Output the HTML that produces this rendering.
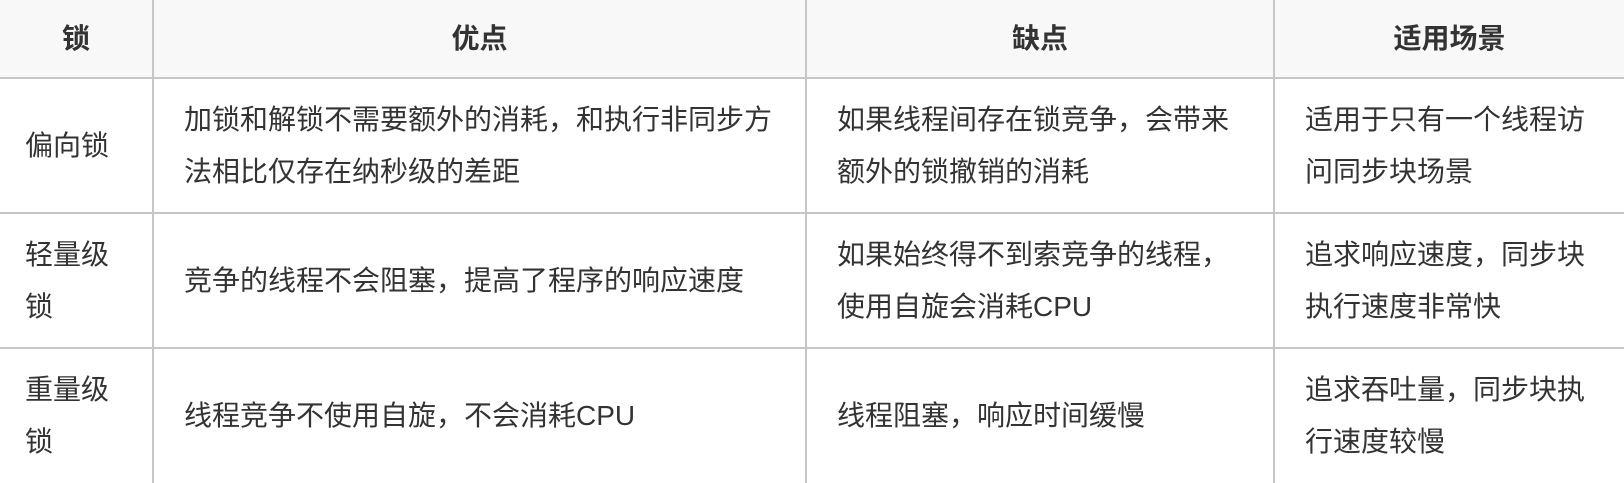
<!DOCTYPE html>
<html><head><meta charset="utf-8"><style>
html,body{margin:0;padding:0;background:#fff;}
body{width:1624px;height:470px;overflow:hidden;font-family:"Liberation Sans","Noto Sans CJK SC",sans-serif;color:#333;}
table{border-collapse:collapse;table-layout:fixed;width:1624px;}
td,th{font-size:28px;line-height:52px;vertical-align:middle;padding:0 30px;border:2px solid #c6c6c6;text-align:left;}
tr>*:first-child{border-left:none;padding:0 22px 0 25px;}
tr>*:nth-child(3){padding-right:40px;}
tr>*:last-child{border-right:none;}
thead tr th{border-top:none;background:#f8f8f8;text-align:center;font-weight:bold;height:77px;padding:0 !important;}
tbody tr{height:135px;}
tbody tr:last-child td{border-bottom:none;}
</style></head><body>
<table>
<colgroup><col style="width:153px"><col style="width:653px"><col style="width:468px"><col style="width:350px"></colgroup>
<thead><tr><th>锁</th><th>优点</th><th>缺点</th><th>适用场景</th></tr></thead>
<tbody>
<tr><td>偏向锁</td><td>加锁和解锁不需要额外的消耗，和执行非同步方法相比仅存在纳秒级的差距</td><td>如果线程间存在锁竞争，会带来额外的锁撤销的消耗</td><td>适用于只有一个线程访问同步块场景</td></tr>
<tr><td>轻量级锁</td><td>竞争的线程不会阻塞，提高了程序的响应速度</td><td>如果始终得不到索竞争的线程，使用自旋会消耗CPU</td><td>追求响应速度，同步块执行速度非常快</td></tr>
<tr><td>重量级锁</td><td>线程竞争不使用自旋，不会消耗CPU</td><td>线程阻塞，响应时间缓慢</td><td>追求吞吐量，同步块执行速度较慢</td></tr>
</tbody></table>
</body></html>
